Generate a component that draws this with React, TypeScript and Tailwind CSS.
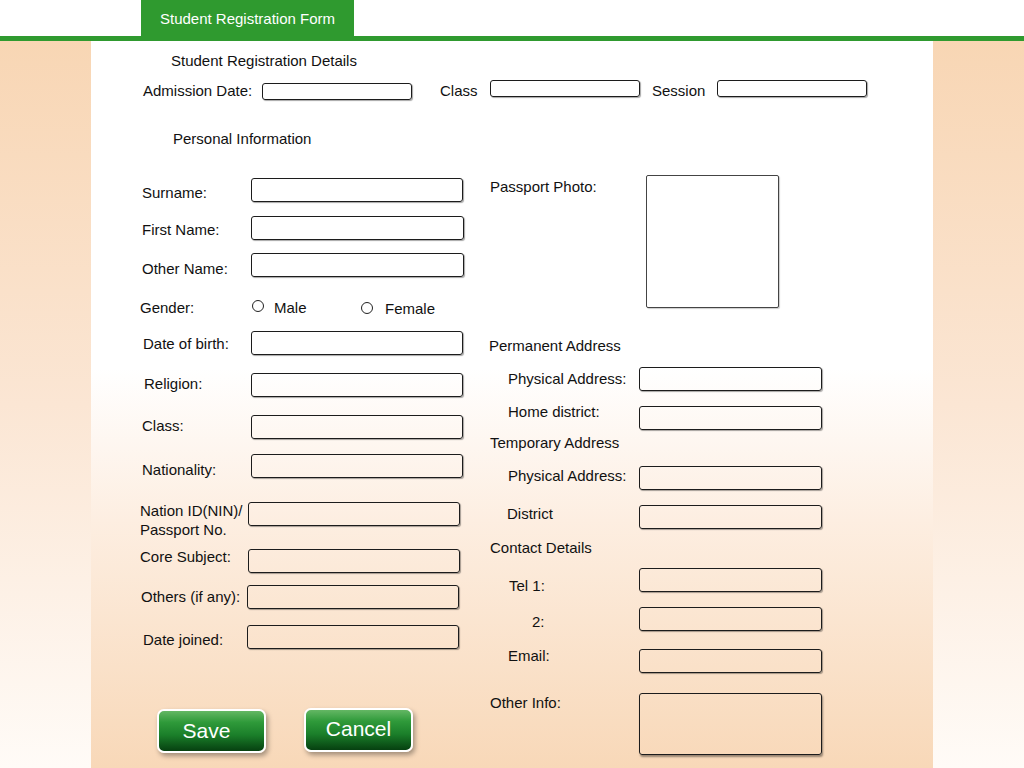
import React from "react";

const Box = ({ cls }: { cls: string }) => (
  <div
    className={`shrink-0 border border-[#1c1c1c] rounded-[3px] shadow-[1px_1px_1px_rgba(0,0,0,0.35)] ${cls}`}
  />
);

const Radio = ({ cls }: { cls: string }) => (
  <div className={`shrink-0 w-[12px] h-[12px] rounded-full border border-[#222] ${cls}`} />
);

const GreenButton = ({ label, cls }: { label: string; cls: string }) => (
  <div
    className={`shrink-0 w-[109px] h-[44px] rounded-[7px] border-2 border-white shadow-[2px_3px_5px_rgba(0,0,0,0.35)] bg-[linear-gradient(to_bottom,#64b764_0%,#2f9a3a_28%,#1b7f2a_60%,#064010_100%)] flex items-center justify-center text-white text-[21px] leading-none ${cls}`}
  >
    {label}
  </div>
);

export default function App() {
  return (
    <div className="w-[1024px] h-[768px] overflow-hidden flex flex-col bg-white text-[#111] text-[15px] leading-[22px] font-['Liberation_Sans',Arial,sans-serif]">
      {/* header */}
      <div className="h-[36px] shrink-0 flex">
        <div className="ml-[141px] w-[213px] h-full bg-[#2f9a2f] flex items-center justify-center text-white text-[15px] pt-[2px]">
          Student Registration Form
        </div>
      </div>
      <div className="h-[5px] shrink-0 bg-[#2f9a2f]" />

      {/* body */}
      <div className="flex flex-1">
        <div className="w-[91px] shrink-0 bg-[linear-gradient(to_bottom,#f8d6b4_0%,#fbe6d4_50%,#fffbf7_100%)]" />

        <div className="w-[842px] shrink-0 flex flex-col bg-[linear-gradient(to_bottom,#ffffff_45%,#fdeee1_66%,#f8d8b8_100%)]">
          <div className="mt-[9px] pl-[80px] h-[20px]">Student Registration Details</div>

          <div className="mt-[10px] pl-[52px] h-[20px] flex items-start">
            <div className="w-[119px]">Admission Date:</div>
            <Box cls="w-[150px] h-[17px] mt-[3px]" />
            <div className="ml-[28px] w-[50px]">Class</div>
            <Box cls="w-[150px] h-[17px]" />
            <div className="ml-[12px] w-[65px]">Session</div>
            <Box cls="w-[150px] h-[17px]" />
          </div>

          <div className="mt-[28px] pl-[82px] h-[20px]">Personal Information</div>

          <div className="mt-[27px] pl-[49px] flex">
            {/* left column */}
            <div className="w-[349px] shrink-0 flex flex-col">
              <div className="mt-[3px] h-[24px] flex items-start">
                <div className="w-[111px] pl-[2px] mt-[4px]">Surname:</div>
                <Box cls="w-[212px] h-[24px]" />
              </div>
              <div className="mt-[14px] h-[24px] flex items-start">
                <div className="w-[111px] pl-[2px] mt-[3px]">First Name:</div>
                <Box cls="w-[213px] h-[24px]" />
              </div>
              <div className="mt-[13px] h-[24px] flex items-start">
                <div className="w-[111px] pl-[2px] mt-[5px]">Other Name:</div>
                <Box cls="w-[213px] h-[24px]" />
              </div>
              <div className="mt-[19px] h-[24px] flex items-start">
                <div className="w-[112px] pl-0 mt-[1px]">Gender:</div>
                <div className="w-[109px] flex items-start">
                  <Radio cls="mt-[4px]" />
                  <div className="ml-[10px] mt-[1px]">Male</div>
                </div>
                <Radio cls="mt-[6px]" />
                <div className="ml-[12px] mt-[2px]">Female</div>
              </div>
              <div className="mt-[11px] h-[24px] flex items-start">
                <div className="w-[111px] pl-[3px] mt-[2px]">Date of birth:</div>
                <Box cls="w-[212px] h-[24px]" />
              </div>
              <div className="mt-[18px] h-[24px] flex items-start">
                <div className="w-[111px] pl-[4px] mt-0">Religion:</div>
                <Box cls="w-[212px] h-[24px]" />
              </div>
              <div className="mt-[18px] h-[24px] flex items-start">
                <div className="w-[111px] pl-[2px] mt-0">Class:</div>
                <Box cls="w-[212px] h-[24px]" />
              </div>
              <div className="mt-[15px] h-[24px] flex items-start">
                <div className="w-[111px] pl-[2px] mt-[5px]">Nationality:</div>
                <Box cls="w-[212px] h-[24px]" />
              </div>
              <div className="mt-[24px] h-[24px] flex items-start">
                <div className="w-[108px] pl-0 mt-[-1px] leading-[19px]">
                  Nation ID(NIN)/
                  <br />
                  Passport No.
                </div>
                <Box cls="w-[212px] h-[24px]" />
              </div>
              <div className="mt-[23px] h-[24px] flex items-start">
                <div className="w-[108px] pl-0 mt-[-3px]">Core Subject:</div>
                <Box cls="w-[212px] h-[24px]" />
              </div>
              <div className="mt-[12px] h-[24px] flex items-start">
                <div className="w-[107px] pl-[1px] mt-[1px]">Others (if any):</div>
                <Box cls="w-[212px] h-[24px]" />
              </div>
              <div className="mt-[16px] h-[24px] flex items-start">
                <div className="w-[107px] pl-[3px] mt-[4px]">Date joined:</div>
                <Box cls="w-[212px] h-[24px]" />
              </div>
              <div className="mt-[59px] h-[46px] flex items-start pl-[17px]">
                <GreenButton label="Save" cls="mt-[1px] pr-[10px] pb-[2px]" />
                <GreenButton label="Cancel" cls="ml-[38px] mt-0 pb-[4px]" />
              </div>
            </div>

            {/* right column */}
            <div className="w-[444px] shrink-0 flex flex-col">
              <div className="h-[133px] flex items-start">
                <div className="w-[157px] pl-[1px] mt-[1px]">Passport Photo:</div>
                <div className="w-[133px] h-[133px] border border-[#444] rounded-[2px] bg-white shadow-[1px_1px_1px_rgba(0,0,0,0.2)]" />
              </div>
              <div className="mt-[27px] h-[20px]">Permanent Address</div>
              <div className="mt-[12px] h-[24px] flex items-start">
                <div className="w-[150px] pl-[19px] mt-[1px]">Physical Address:</div>
                <Box cls="w-[183px] h-[24px]" />
              </div>
              <div className="mt-[10px] h-[29px] flex items-start">
                <div className="w-[150px] pl-[19px] mt-0">Home district:</div>
                <Box cls="w-[183px] h-[24px] mt-[5px]" />
              </div>
              <div className="mt-[2px] h-[20px] pl-[1px]">Temporary Address</div>
              <div className="mt-[13px] h-[25px] flex items-start">
                <div className="w-[150px] pl-[19px] mt-0">Physical Address:</div>
                <Box cls="w-[183px] h-[24px] mt-[1px]" />
              </div>
              <div className="mt-[13px] h-[26px] flex items-start">
                <div className="w-[150px] pl-[18px] mt-0">District</div>
                <Box cls="w-[183px] h-[24px] mt-[2px]" />
              </div>
              <div className="mt-[8px] h-[20px] pl-[1px]">Contact Details</div>
              <div className="mt-[11px] h-[24px] flex items-start">
                <div className="w-[150px] pl-[20px] mt-[7px]">Tel 1:</div>
                <Box cls="w-[183px] h-[24px]" />
              </div>
              <div className="mt-[15px] h-[24px] flex items-start">
                <div className="w-[150px] pl-[43px] mt-[4px]">2:</div>
                <Box cls="w-[183px] h-[24px]" />
              </div>
              <div className="mt-[14px] h-[28px] flex items-start">
                <div className="w-[150px] pl-[19px] mt-0">Email:</div>
                <Box cls="w-[183px] h-[24px] mt-[4px]" />
              </div>
              <div className="mt-[19px] h-[63px] flex items-start">
                <div className="w-[150px] pl-[1px] mt-0">Other Info:</div>
                <Box cls="w-[183px] h-[62px] mt-[1px] shadow-[1px_2px_2px_rgba(0,0,0,0.4)]" />
              </div>
            </div>
          </div>
        </div>

        <div className="w-[91px] shrink-0 bg-[linear-gradient(to_bottom,#f8d6b4_0%,#fbe6d4_50%,#fffbf7_100%)]" />
      </div>
    </div>
  );
}
